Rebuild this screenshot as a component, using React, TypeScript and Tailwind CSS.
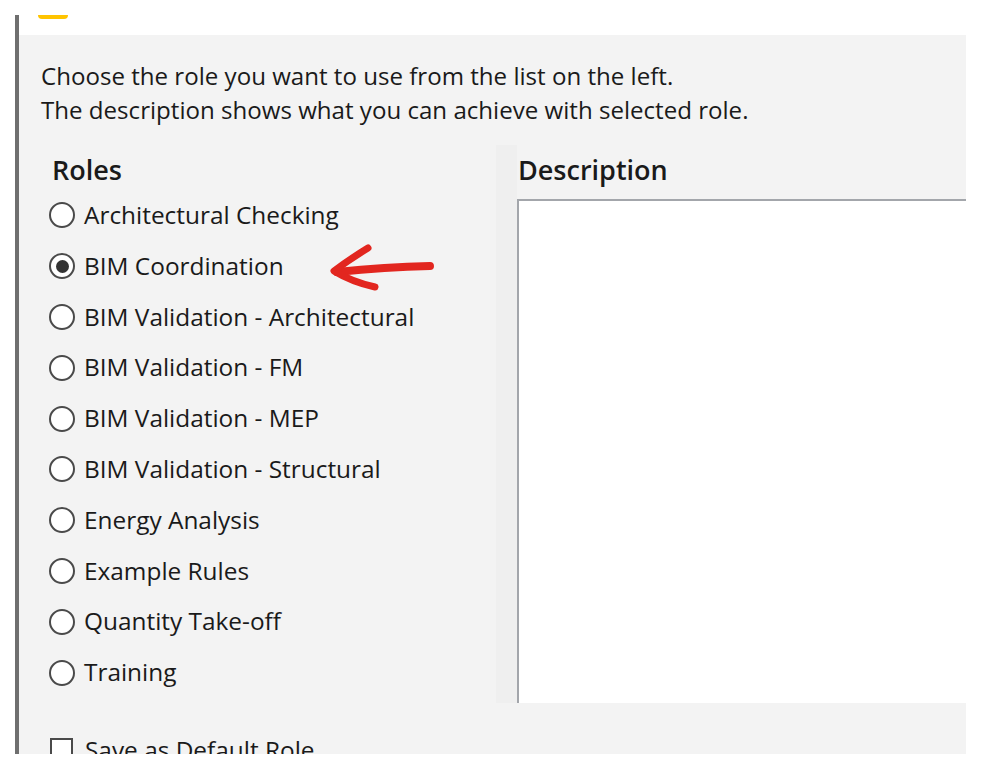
import React from "react";

const roles = [
  "Architectural Checking",
  "BIM Coordination",
  "BIM Validation - Architectural",
  "BIM Validation - FM",
  "BIM Validation - MEP",
  "BIM Validation - Structural",
  "Energy Analysis",
  "Example Rules",
  "Quantity Take-off",
  "Training",
];

function Radio({ checked }: { checked: boolean }) {
  return (
    <span className="flex h-[26px] w-[26px] shrink-0 items-center justify-center rounded-full border-2 border-[#4a4a4a] bg-white">
      {checked && <span className="h-[13px] w-[13px] rounded-full bg-[#333333]" />}
    </span>
  );
}

export default function App() {
  const font = { fontFamily: '"Open Sans", "Noto Sans", sans-serif' };
  return (
    <div className="relative h-[771px] w-[1003px] overflow-hidden bg-white text-[#1a1a1a]" style={font}>
      <div className="flex pl-[15px] pt-[15px]">
        <div className="h-[739px] w-[4px] bg-[#6f6f6f]" />
        <div className="flex w-[947px] flex-col">
          <div className="h-[20px] shrink-0 pl-[19px]">
            <div className="h-[4px] w-[30px] rounded-b-full bg-[#ffc400]" />
          </div>
          <div className="flex h-[719px] shrink-0 flex-col overflow-hidden bg-[#f3f3f3]">
            <div className="shrink-0 pl-[22px] pt-[24px] text-[24.1px] leading-[34px]">
              <div>Choose the role you want to use from the list on the left.</div>
              <div>The description shows what you can achieve with selected role.</div>
            </div>
            <div className="mt-[18px] flex h-[558px] shrink-0">
              <div className="w-[477px] pl-[30px] pt-[10px]">
                <div className="h-[30px] pl-[3px] text-[27px] font-semibold leading-[30px]">Roles</div>
                <div className="mt-[5px] flex flex-col">
                  {roles.map((r, i) => (
                    <div key={r} className="flex h-[50.8px] items-center gap-[9px] text-[24.4px]">
                      <Radio checked={i === 1} />
                      <span>{r}</span>
                    </div>
                  ))}
                </div>
              </div>
              <div className="w-[21px] bg-[#efefef]" />
              <div className="flex flex-1 flex-col">
                <div className="flex h-[54px] items-center pb-[4px] pl-[1px] text-[27px] font-semibold">Description</div>
                <div className="flex-1 border-l-2 border-t-2 border-[#a3a6ab] bg-white" />
              </div>
            </div>
            <div className="mt-[35px] flex shrink-0 items-start gap-[12px] pl-[31px] text-[24.4px] leading-[24px]">
              <span className="h-[23px] w-[23px] shrink-0 border-2 border-[#4a4a4a] bg-white" />
              <span>Save as Default Role</span>
            </div>
          </div>
        </div>
      </div>
      <svg className="absolute left-0 top-0" width="1003" height="771" viewBox="0 0 1003 771">
        <path d="M 430 266 Q 385 267 337 272" stroke="#e2261f" strokeWidth="8" fill="none" strokeLinecap="round" />
        <path d="M 368 248 Q 350 259 334 271 Q 352 282 375 287" stroke="#e2261f" strokeWidth="7" fill="none" strokeLinecap="round" strokeLinejoin="round" />
      </svg>
    </div>
  );
}
